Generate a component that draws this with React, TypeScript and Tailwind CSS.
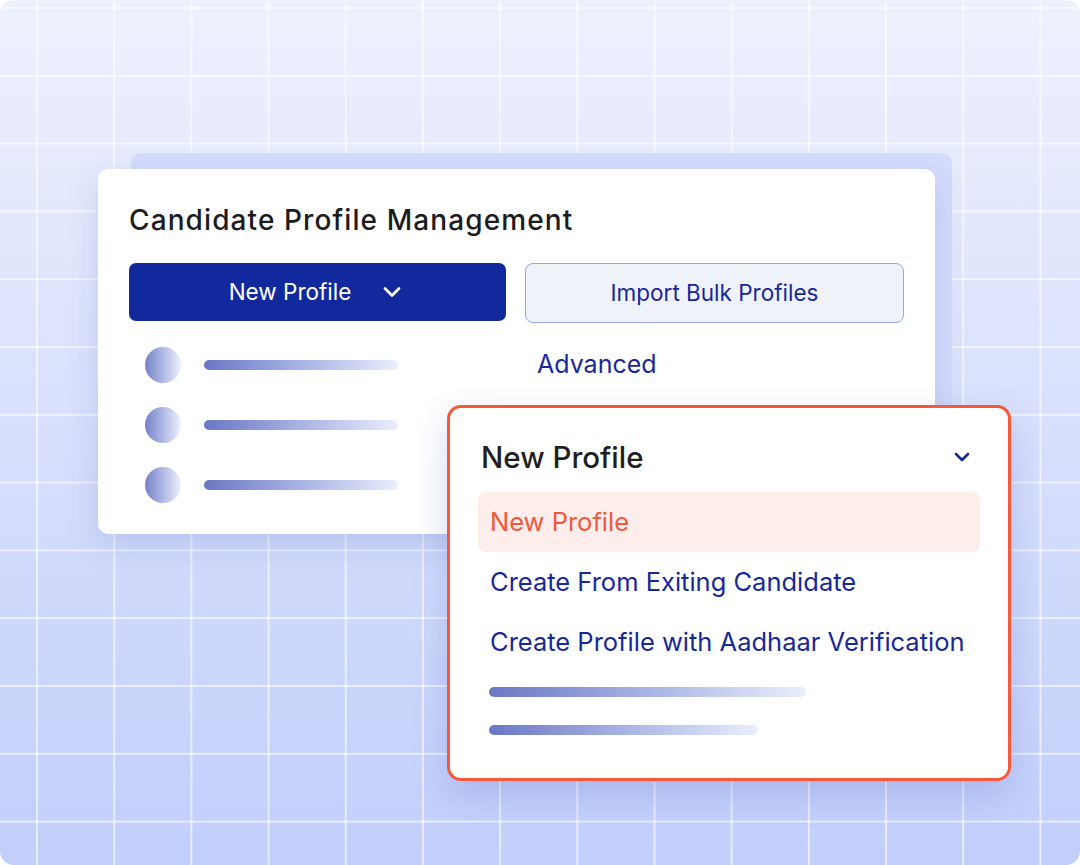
import { ChevronDown } from 'lucide-react';

const font = { fontFamily: 'Inter, "Noto Sans", sans-serif' };

function Bar({ className }: { className: string }) {
  return (
    <div
      className={`h-[10px] rounded-full bg-gradient-to-r from-[#6b77c4] via-[#a9b3e3] to-[#eaeefd] ${className}`}
    />
  );
}

function ListRow() {
  return (
    <div className="flex h-[60px] items-center pl-4">
      <div className="h-9 w-9 rounded-full bg-gradient-to-r from-[#7682c9] to-[#eef1fd]" />
      <Bar className="ml-[23px] w-[194px]" />
    </div>
  );
}

function ProfileCard() {
  return (
    <div className="absolute left-[98px] top-[169px] w-[837px] rounded-[10px] bg-white px-[31px] pb-[19px] pt-[35px] shadow-[0_12px_32px_rgba(70,90,180,0.18)]">
      <h1 className="text-[28px] font-medium leading-8 tracking-[1.1px] text-[#1c1c1f]">
        Candidate Profile Management
      </h1>

      <div className="mt-[27px] grid grid-cols-[377px_379px] gap-[19px]">
        <button className="flex h-[58px] items-center justify-center gap-[27px] rounded-[7px] bg-[#12299e] text-[22.5px] text-white">
          <span>New Profile</span>
          <ChevronDown className="h-7 w-7" strokeWidth={2.3} />
        </button>
        <button className="flex h-[60px] items-center justify-center rounded-[8px] border border-[#98a6ee] bg-[#f0f2fa] text-[22.5px] text-[#17289a]">
          Import Bulk Profiles
        </button>
      </div>

      <div className="mt-[12px] grid grid-cols-[377px_379px] gap-[19px]">
        <div className="flex flex-col">
          <ListRow />
          <ListRow />
          <ListRow />
        </div>
        <div className="flex h-[60px] items-center pl-3 text-[25px] text-[#17289a]">Advanced</div>
      </div>
    </div>
  );
}

function DropdownMenu() {
  return (
    <div className="absolute left-[447px] top-[405px] h-[376px] w-[564px] rounded-[14px] border-[3px] border-[#f5583a] bg-white px-[28px] pt-[33px] shadow-[0_14px_34px_rgba(70,90,180,0.22)]">
      <div className="flex h-8 items-center justify-between pl-[3px] pr-[6px]">
        <span className="text-[29.5px] font-medium text-[#1f1f22]">New Profile</span>
        <ChevronDown className="h-6 w-6 text-[#17289a]" strokeWidth={2.6} />
      </div>

      <div className="mt-[19px] flex flex-col text-[25.5px]">
        <div className="flex h-[60px] items-center rounded-[8px] bg-[#fdeeec] pl-3 text-[#f2583b]">
          New Profile
        </div>
        <div className="flex h-[60px] items-center pl-3 text-[#17289a]">Create From Exiting Candidate</div>
        <div className="flex h-[60px] items-center pl-3 text-[#17289a]">
          Create Profile with Aadhaar Verification
        </div>
      </div>

      <div className="ml-[11px] mt-[15px] flex flex-col gap-[28px]">
        <Bar className="w-[317px]" />
        <Bar className="w-[269px]" />
      </div>
    </div>
  );
}

export default function App() {
  return (
    <div style={font} className="h-[865px] w-[1080px] bg-white">
      <div className="relative h-[865px] w-[1080px] overflow-hidden rounded-[14px] bg-gradient-to-b from-[#eef1fd] to-[#c2cefb]">
        {/* grid */}
        <div className="absolute inset-0 bg-[linear-gradient(to_right,rgba(255,255,255,0.6)_2px,transparent_2px),linear-gradient(to_bottom,rgba(255,255,255,0.6)_2px,transparent_2px)] bg-[size:77.2px_67.8px] bg-[position:36px_7px]" />

        {/* back panel */}
        <div className="absolute left-[131px] top-[153px] h-[300px] w-[821px] rounded-[10px] bg-[#d3dcfc]" />

        <ProfileCard />
        <DropdownMenu />
      </div>
    </div>
  );
}
